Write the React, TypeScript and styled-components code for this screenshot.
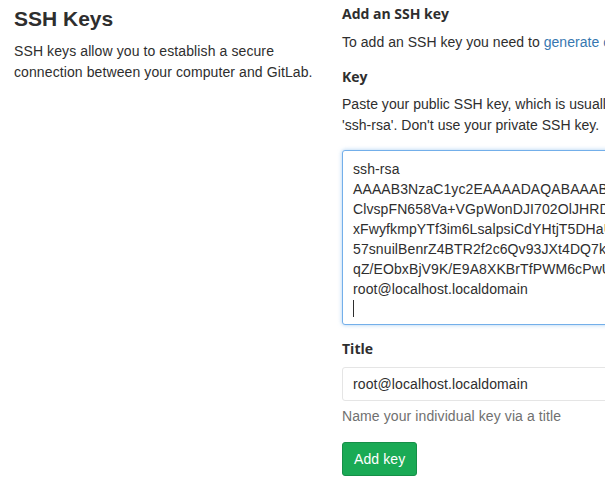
import styled, { createGlobalStyle } from "styled-components";

const GlobalStyle = createGlobalStyle`
  html, body {
    margin: 0;
    padding: 0;
    background: #ffffff;
  }
  body {
    font-family: "Liberation Sans", Arial, sans-serif;
    font-size: 14px;
    letter-spacing: 0.1px;
    color: #2e2e2e;
    overflow: hidden;
  }
`;

const Page = styled.div`
  display: grid;
  grid-template-columns: 313px 1fr;
  column-gap: 15px;
  padding: 0 0 0 14px;
  width: 605px;
  height: 494px;
  box-sizing: border-box;
  overflow: hidden;
`;

const Intro = styled.div`
  padding-top: 7px;
`;

const Heading = styled.h4`
  margin: 0 0 10px;
  font-size: 21px;
  line-height: 24px;
  font-weight: 700;
  letter-spacing: 0;
  color: #2e2e2e;
`;

const Text = styled.p`
  margin: 0;
  line-height: 21px;
`;

const FormColumn = styled.div`
  padding-top: 4px;
  min-width: 0;
  width: 420px;
`;

const Label = styled.div<{ $gap?: number }>`
  font-family: "Open Sans", "Noto Sans", sans-serif;
  font-weight: 700;
  font-size: 14px;
  line-height: 20px;
  letter-spacing: 0;
  margin-bottom: ${(p) => p.$gap ?? 8}px;
`;

const Hint = styled.p`
  margin: 0 0 14px;
  line-height: 21px;
  letter-spacing: 0.03px;
  white-space: nowrap;
`;

const Link = styled.a`
  color: #3777b0;
  text-decoration: none;
`;

const KeyField = styled.div`
  position: relative;
  margin-bottom: 14px;
`;

const KeyArea = styled.textarea`
  display: block;
  width: 100%;
  height: 175px;
  box-sizing: border-box;
  padding: 8px 10px 4px;
  border: 1px solid #73afea;
  border-radius: 3px;
  box-shadow: 0 0 4px rgba(115, 175, 234, 0.6);
  font-family: "Liberation Sans", Arial, sans-serif;
  font-size: 14px;
  letter-spacing: 0.1px;
  line-height: 20px;
  color: #2e2e2e;
  resize: none;
  white-space: pre;
  overflow: hidden;
  outline: none;
  caret-color: transparent;
`;

const Caret = styled.span`
  position: absolute;
  left: 11px;
  top: 150px;
  width: 1px;
  height: 17px;
  background: #2e2e2e;
`;

const TitleInput = styled.input`
  display: block;
  width: 100%;
  height: 34px;
  box-sizing: border-box;
  padding: 6px 10px;
  border: 1px solid #e5e5e5;
  border-radius: 3px;
  font-family: "Liberation Sans", Arial, sans-serif;
  font-size: 14px;
  letter-spacing: 0.1px;
  color: #2e2e2e;
  outline: none;
`;

const Help = styled.p`
  margin: 5px 0 16px;
  line-height: 20px;
  color: #707070;
`;

const SubmitButton = styled.button`
  height: 34px;
  padding: 0 11px;
  border: 1px solid #168f48;
  border-radius: 3px;
  background: #1aaa55;
  color: #ffffff;
  font-family: "Liberation Sans", Arial, sans-serif;
  font-size: 14px;
  letter-spacing: 0.1px;
  cursor: pointer;
`;

const keyText = [
  "ssh-rsa",
  "AAAAB3NzaC1yc2EAAAADAQABAAABAQDk7f3Rvq8Qz1nYc5hJk2Lm",
  "ClvspFN658Va+VGpWonDJI702OlJHRDkPq3u7ZWsNe4rT1bXoA9y",
  "xFwyfkmpYTf3im6LsalpsiCdYHtjT5DHaUoWv6GnR2sLp8eK0dZc",
  "57snuilBenrZ4BTR2f2c6Qv93JXt4DQ7k5mJ2gYhVbCx1aUeLr9o",
  "qZ/EObxBjV9K/E9A8XKBrTfPWM6cPwUiNs3dHqT0lZ8kY4vWmBe",
  "root@localhost.localdomain",
  "",
].join("\n");

export default function App() {
  return (
    <>
      <GlobalStyle />
      <Page>
        <Intro>
          <Heading>SSH Keys</Heading>
          <Text>
            SSH keys allow you to establish a secure
            <br />
            connection between your computer and GitLab.
          </Text>
        </Intro>
        <FormColumn>
          <Label $gap={8}>Add an SSH key</Label>
          <Hint>
            To add an SSH key you need to <Link href="#">generate one</Link> or
            use an existing key.
          </Hint>
          <Label $gap={7}>Key</Label>
          <Hint>
            Paste your public SSH key, which is usually contained in the file
            '~/.ssh/id_rsa.pub' and begins with
            <br />
            'ssh-rsa'. Don't use your private SSH key.
          </Hint>
          <KeyField>
            <KeyArea defaultValue={keyText} spellCheck={false} />
            <Caret />
          </KeyField>
          <Label $gap={8}>Title</Label>
          <TitleInput defaultValue="root@localhost.localdomain" />
          <Help>Name your individual key via a title</Help>
          <SubmitButton>Add key</SubmitButton>
        </FormColumn>
      </Page>
    </>
  );
}
